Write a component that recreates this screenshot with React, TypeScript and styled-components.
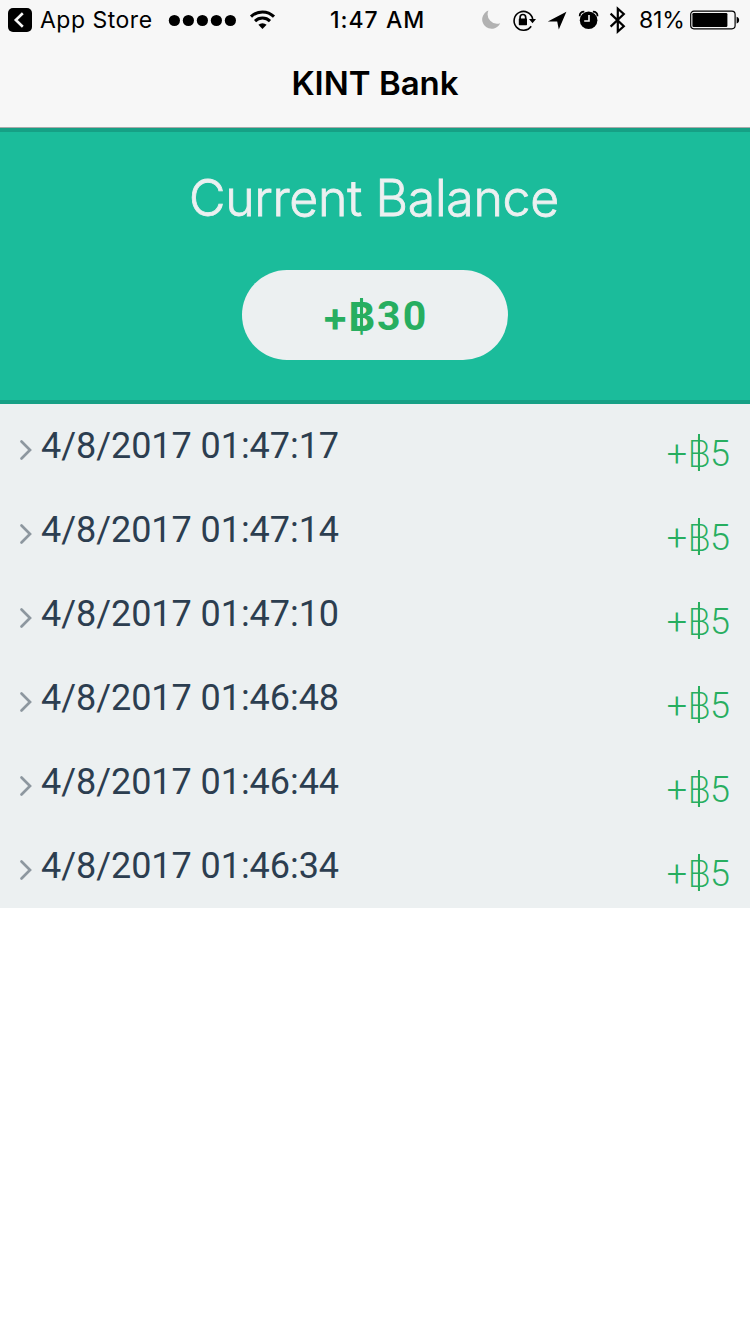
import React from 'react';
import styled, { createGlobalStyle } from 'styled-components';

const GlobalStyle = createGlobalStyle`
  * { box-sizing: border-box; }
  body { margin: 0; background: #fff; font-family: Inter, "Liberation Sans", sans-serif; }
`;

const Screen = styled.main`
  display: flex;
  flex-direction: column;
  width: 750px;
  min-height: 1334px;
  background: #fff;
`;

const Header = styled.header`
  height: 128px;
  background: #f7f7f7;
  border-bottom: 1px solid #a9aaaa;
`;

const StatusBar = styled.div`
  display: flex;
  height: 40px;
  padding: 0 10px 0 8px;
  color: #000;
`;

const StatusGroup = styled.div<{ $width: number }>`
  display: flex;
  align-items: center;
  flex: none;
  width: ${(p) => p.$width}px;
  height: 40px;
`;

const StatusText = styled.span<{ $size: number; $weight?: number; $tracking: number }>`
  font-size: ${(p) => p.$size}px;
  font-weight: ${(p) => p.$weight ?? 400};
  letter-spacing: ${(p) => p.$tracking}px;
  line-height: 40px;
  white-space: nowrap;
`;

const BackBadge = styled.svg`
  margin-right: 8px;
  flex: none;
`;

const Signal = styled.svg`
  margin-left: 15px;
  flex: none;
`;

const Glyphs = styled.svg`
  flex: none;
  margin-right: 11px;
`;

const Battery = styled.svg`
  flex: none;
  margin-left: auto;
`;

const Title = styled.h1`
  margin: 0;
  padding-top: 22px;
  font-size: 33px;
  font-weight: 600;
  line-height: 42px;
  text-align: center;
`;

const Balance = styled.section`
  display: flex;
  flex-direction: column;
  align-items: center;
  height: 276px;
  padding-top: 36px;
  border-top: 4px solid #16a085;
  border-bottom: 4px solid #16a085;
  background: #1bbc9b;
`;

const BalanceLabel = styled.h2`
  margin: 0 2px 42px 0;
  color: #ecf0f1;
  font-size: 50px;
  font-weight: 300;
  line-height: 60px;
  letter-spacing: -0.3px;
  -webkit-text-stroke: 0.8px #ecf0f1;
`;

const Pill = styled.div`
  display: flex;
  align-items: center;
  justify-content: center;
  width: 266px;
  height: 90px;
  padding-top: 2px;
  border-radius: 45px;
  background: #ecf0f1;
  color: #27ae60;
  font-size: 40px;
  font-weight: 700;
`;

const PillDigits = styled.span`
  margin-left: 2px;
  font-family: Roboto, sans-serif;
  font-size: 41px;
  letter-spacing: 2.2px;
`;

const List = styled.ul`
  margin: 0;
  padding: 0;
  list-style: none;
  background: #ecf0f1;
`;

const Row = styled.li`
  display: flex;
  align-items: flex-start;
  height: 84px;
  padding: 0 20px 0 19px;
`;

const Chevron = styled.svg`
  flex: none;
  margin: 35px 9px 0 0;
`;

const Stamp = styled.span`
  padding-top: 20px;
  color: #2c3e50;
  font-family: Roboto, sans-serif;
  font-size: 36px;
  line-height: 44px;
  letter-spacing: -0.05px;
`;

const Amount = styled.span`
  display: flex;
  margin-left: auto;
  padding-top: 28px;
  color: #27ae60;
  font-family: Roboto, sans-serif;
  font-size: 36px;
  font-weight: 300;
  line-height: 44px;
`;

const Baht = styled.span<{ $bar: number; $height: number; $left: number; $top: number }>`
  position: relative;
  font-family: Inter, sans-serif;

  &::after {
    content: '';
    position: absolute;
    left: ${(p) => p.$left}px;
    top: ${(p) => p.$top}px;
    width: ${(p) => p.$bar}px;
    height: ${(p) => p.$height}px;
    background: currentColor;
  }
`;

const LightBaht = styled(Baht)`
  margin-right: -1px;
  font-size: 37px;
  font-weight: 200;
`;

const stamps = [
  '4/8/2017 01:47:17',
  '4/8/2017 01:47:14',
  '4/8/2017 01:47:10',
  '4/8/2017 01:46:48',
  '4/8/2017 01:46:44',
  '4/8/2017 01:46:34',
];

export default function App() {
  return (
    <Screen>
      <GlobalStyle />
      <Header>
        <StatusBar>
          <StatusGroup $width={322}>
            <BackBadge width="24" height="24" viewBox="0 0 24 24">
              <rect width="24" height="24" rx="5" />
              <path d="M14.8 5.2 7.8 12l7 6.8" fill="none" stroke="#f7f7f7" strokeWidth="2.6" />
            </BackBadge>
            <StatusText $size={23} $tracking={0.5}>App Store</StatusText>
            <Signal width="108" height="24" viewBox="0 0 108 24">
              {[0, 1, 2, 3, 4].map((i) => (
                <circle key={i} cx={6.4 + i * 14} cy="12.5" r="5.6" />
              ))}
              <g fill="none" stroke="#000" strokeWidth="3">
                <path d="M83 8.6a16.4 16.4 0 0 1 23 0" />
                <path d="M87 13.1a10.7 10.7 0 0 1 15 0" />
              </g>
              <path d="M90.4 16.8a5.9 5.9 0 0 1 8.2 0L94.5 21z" />
            </Signal>
          </StatusGroup>
          <StatusGroup $width={150}>
            <StatusText $size={23} $weight={500} $tracking={1}>1:47 AM</StatusText>
          </StatusGroup>
          <StatusGroup $width={260}>
            <Glyphs width="148" height="32" viewBox="480 4 148 32">
              <path d="M488.4 10.6a9.4 9.4 0 1 0 11.8 12.6A9.5 9.5 0 0 1 488.4 10.6z" fill="#b2b2b2" />
              <g fill="none" stroke="#000" strokeWidth="1.6">
                <path d="M531.2 26.2a9.4 9.4 0 1 1 1.5-7.2" />
                <path d="M520.1 19v-1.7a2.8 2.8 0 0 1 5.6 0V19" strokeWidth="1.7" />
              </g>
              <rect x="518.8" y="18.4" width="8.2" height="6.8" rx=".6" />
              <path d="M529 19h7l-3.5 4.3z" />
              <path d="M566.4 11.8 558.8 29.6 557.2 21.6 547.8 21.4z" />
              <circle cx="588.6" cy="20.3" r="8.8" />
              <path d="M589 15v6h-4.8" fill="none" stroke="#f7f7f7" strokeWidth="1.6" />
              <path d="M579.7 16.2c0-3 1.8-4.6 4.6-4.6M597.5 16.2c0-3-1.8-4.6-4.6-4.6" fill="none" stroke="#000" strokeWidth="1.8" />
              <path d="m610.6 13.6 13.2 12.6-6 5.4V8.6l6 5.4-13.2 12.6" fill="none" stroke="#000" strokeWidth="2.2" />
            </Glyphs>
            <StatusText $size={23} $tracking={-0.2}>81%</StatusText>
            <Battery width="50" height="20" viewBox="0 0 50 20">
              <rect x=".7" y="1.2" width="44.4" height="17.6" rx="3.2" fill="none" stroke="#000" strokeWidth="1.2" />
              <rect x="2.4" y="3" width="35" height="14" rx="1.2" />
              <path d="M46.6 6.7c3.4.7 3.4 6 0 6.7z" />
            </Battery>
          </StatusGroup>
        </StatusBar>
        <Title>KINT Bank</Title>
      </Header>
      <Balance>
        <BalanceLabel>Current Balance</BalanceLabel>
        <Pill>
          +<Baht $bar={3} $height={33} $left={11.5} $top={6}>฿</Baht>
          <PillDigits>30</PillDigits>
        </Pill>
      </Balance>
      <List>
        {stamps.map((stamp) => (
          <Row key={stamp}>
            <Chevron width="13" height="22" viewBox="0 0 13 22">
              <path d="M2.5 2.5 11 11l-8.5 8.5" fill="none" stroke="#8d979f" strokeWidth="2.7" strokeLinecap="round" />
            </Chevron>
            <Stamp>{stamp}</Stamp>
            <Amount>
              +<LightBaht $bar={1.5} $height={37} $left={11} $top={2}>฿</LightBaht>5
            </Amount>
          </Row>
        ))}
      </List>
    </Screen>
  );
}
